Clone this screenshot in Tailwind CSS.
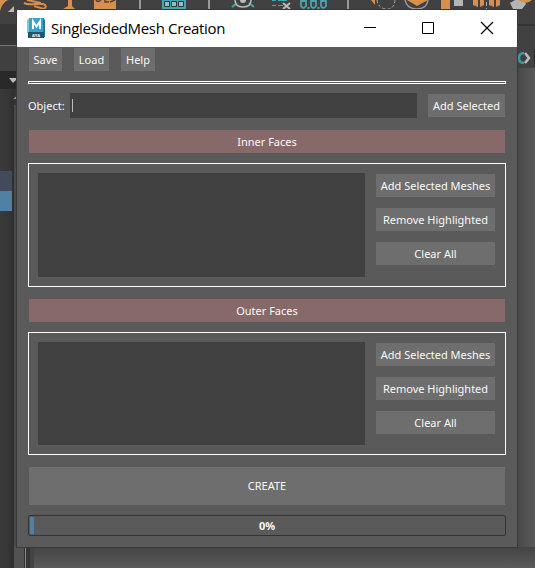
<!DOCTYPE html>
<html lang="en"><head><meta charset="utf-8"><title>SingleSidedMesh Creation</title>
<script src="https://cdn.jsdelivr.net/npm/@tailwindcss/browser@4"></script></head>
<body class="w-[535px] h-[568px] overflow-hidden bg-[#5a5a5a]">
<div class="relative w-[535px] h-[568px] overflow-hidden font-['Noto_Sans','Open_Sans',sans-serif]">
<!-- host application behind the dialog -->
<svg class="absolute inset-0" width="535" height="568" viewBox="0 0 535 568">
<defs><linearGradient id="l" x2="1"><stop offset="0" stop-color="#3a3a3a"/><stop offset=".5" stop-color="#373737"/><stop offset="1" stop-color="#2f2f2f"/></linearGradient>
<linearGradient id="r" x2="1"><stop offset="0" stop-color="#484848"/><stop offset="1" stop-color="#595959"/></linearGradient>
<linearGradient id="b" x2="0" y2="1"><stop offset="0" stop-color="#444"/><stop offset="1" stop-color="#5a5a5a"/></linearGradient></defs>
<rect width="535" height="568" fill="#5a5a5a"/>
<rect width="535" height="68" fill="#414141"/>
<rect y="24" width="17" height="21" fill="#363636"/><rect y="45" width="17" height="1" fill="#777"/>
<rect y="71" width="17" height="18" fill="#292929"/><rect y="46" width="17" height="25" fill="#404040"/>
<rect y="89" width="17" height="479" fill="#353535"/><rect y="89" width="14" height="479" fill="url(#l)"/><rect x="14" y="105" width="3" height="463" fill="#4a4a4a"/>
<path d="M9 78h8v1l-4 4z" fill="#bbb"/><path d="M8 12h6V6z" fill="#bbb"/><path d="M13 99l4-3v3z" fill="#999"/>
<rect y="171" width="12" height="20" fill="#414b59"/><rect y="191" width="12" height="20" fill="#5080a3"/>
<rect x="517" y="24" width="18" height="2" fill="#343434"/><rect x="517" y="68" width="18" height="500" fill="url(#r)"/>
<rect x="14" y="547" width="521" height="21" fill="url(#b)"/><rect x="14" y="547" width="10" height="21" fill="#525252"/><rect x="24" y="547" width="1" height="21" fill="#333"/><rect x="25" y="547" width="1" height="21" fill="#858585"/><rect x="26" y="547" width="4" height="21" fill="#363636"/><rect x="30" y="547" width="4" height="21" fill="#444"/>
<g fill="#d68f4e"><path d="M0 0h8Q2 3 0 11z"/><path d="M68 0h4v6l3 3H63l5-3zM94 0h22v10H94z"/><path d="M371 0h4v5zM407 0l10 6 11-6zM441 0h9v9h-9zM473 0h5v7l-5-2zM480 0h4v5l-4 2zM489 0h5v7l-5-2zM496 0h4v5l-4 2z"/></g>
<path d="M24 3q4 2 11 1h8q5 2 1 5l-10-3M27 0l14 3" fill="none" stroke="#d68f4e" stroke-width="2"/>
<path d="M96 0q2 3 5 0M105 0v2h4M110 2l5-2" fill="none" stroke="#554231" stroke-width="1.500"/>
<path d="M140 0v10M209 0v10M348 0v10" stroke="#9b9b9b" stroke-width="2"/>
<path d="M162 0h24v9h-24z" fill="#48a4b0"/><path d="M164.500 1.500h5v5h-5zM171.500 1.500h5v5h-5zM178.500 1.500h5v5h-5z" fill="#91bfc2" stroke="#333"/>
<path d="M232 7l5-4M254 7l-5-4" stroke="#48a4b0" stroke-width="2"/><path d="M235 0q0 7 8 7t8-7" fill="none" stroke="#bbb" stroke-width="1.500"/><circle cx="243" cy="0" r="3" fill="#bbb"/>
<path d="M272 .5h4M278 .5h9M272 5.500h4M278 5.500h5" stroke="#48a4b0"/><path d="M283 3l7 6M290 3l-7 6" stroke="#bbb" stroke-width="2"/>
<path d="M301 1v5q2 4 5 0V1zM311 1v5q2 4 5 0V1zM321 1v5q2 4 5 0V1z" fill="none" stroke="#48a4b0" stroke-width="1.800"/><path d="M307.500 7h2v2h-2zM317.500 7h2v2h-2z" fill="#48a4b0"/>
<path d="M377 0q1 8 9 9t9-9" fill="none" stroke="#aaa" stroke-dasharray="3 2"/><path d="M405 0q2 9 12 9t11-9" fill="none" stroke="#999" stroke-width="1.500"/><path d="M454 0h9v6h-9zM510 3l5-3h9l2 4-4 5h-9z" fill="#b5b5b5"/><path d="M519 0q6 6 13 0z" fill="#d68f4e"/><path d="M486.500 2v8" stroke="#aaa" stroke-dasharray="4 2"/>
<path d="M524 53q-5 0-5 5t5 5" fill="none" stroke="#3d99a5" stroke-width="2.500"/><path d="M525 53l4 5-4 5" fill="none" stroke="#bbb" stroke-width="2.500"/><path d="M534 49h1v18h-1z" fill="#292929"/>
</svg>
<!-- dialog -->
<main class="absolute left-[16px] top-[9px] w-[502px] h-[539px] border border-[#393939] bg-[#5a5a5a] text-[#f8f8f8] text-[11px] leading-[14px]">
<header class="h-[37px] bg-white flex items-center text-black">
<svg class="ml-[9px] mt-px shrink-0" width="20" height="22" viewBox="0 0 20 22"><path d="M1 2l3-2v15H1z" fill="#89c5ce"/><path d="M3 0h15v15H3z" fill="#38a3cc"/><path d="M17 0l2 2v17l-2 1z" fill="#287895"/><path d="M2 14h16v6H2z" fill="#24546b"/><path d="M7 11V3.500l3.500 5 3.500-5V11" fill="none" stroke="#fff" stroke-width="2"/><text x="6" y="18.800" font-size="4" font-weight="700" fill="#fff" font-family="Open Sans">AYA</text></svg>
<h1 class="ml-[5px] w-[190px] whitespace-nowrap font-['Open_Sans',sans-serif] text-[15px] leading-[19px] tracking-[-0.34px]">SingleSidedMesh Creation</h1>
<svg class="ml-[123px] shrink-0" width="130" height="15" viewBox="0 0 130 15" fill="none" stroke="#000"><path d="M0 6.500h12M58.500 1.500h11v11h-11z"/><path d="M117 1l12 12M129 1l-12 12" stroke-width="1.200"/></svg>
</header>
<div class="px-[11px] flex flex-col">
<nav class="mt-px ml-px flex gap-[12px] h-[23px]"><button class="w-[33px] bg-[#6e6e6e]">Save</button><button class="w-[35px] bg-[#6e6e6e]">Load</button><button class="w-[34px] bg-[#6e6e6e]">Help</button></nav>
<div class="mt-[10px] h-[3px] border border-white"></div>
<div class="mt-[9px] h-[25px] flex items-center"><label class="w-[42px] whitespace-nowrap">Object:</label><div class="w-[347px] h-[25px] bg-[#414141] flex items-center pl-[2px]"><span class="w-px h-[13px] bg-[#bbb]"></span></div><button class="ml-[11px] w-[77px] h-[23px] bg-[#6e6e6e] whitespace-nowrap">Add Selected</button></div>
<div class="mt-[12px] mx-px h-[23px] bg-[#886969] flex items-center justify-center">Inner Faces</div>
<section class="mt-[10px] h-[124px] border border-white flex pl-[9px] pt-[9px]"><div class="w-[327px] h-[104px] bg-[#414141]"></div><div class="ml-[11px] mt-px flex flex-col gap-[11px] w-[119px]"><button class="h-[23px] bg-[#6e6e6e]">Add Selected Meshes</button><button class="h-[23px] bg-[#6e6e6e]">Remove Highlighted</button><button class="h-[23px] bg-[#6e6e6e]">Clear All</button></div></section>
<div class="mt-[12px] mx-px h-[23px] bg-[#886969] flex items-center justify-center">Outer Faces</div>
<section class="mt-[10px] h-[123px] border border-white flex pl-[9px] pt-[9px]"><div class="w-[327px] h-[103px] bg-[#414141]"></div><div class="ml-[11px] mt-px flex flex-col gap-[11px] w-[119px]"><button class="h-[23px] bg-[#6e6e6e]">Add Selected Meshes</button><button class="h-[23px] bg-[#6e6e6e]">Remove Highlighted</button><button class="h-[23px] bg-[#6e6e6e]">Clear All</button></div></section>
<button class="mt-[12px] mx-px h-[38px] bg-[#6e6e6e]">CREATE</button>
<div class="mt-[10px] h-[21px] border border-[#333] rounded-[2px] flex items-center pl-px"><span class="w-[4px] h-[17px] bg-[#5080a3] rounded-[1px]"></span><span class="flex-1 text-center font-bold pr-[5px]">0%</span></div>
</div></main></div></body></html>
